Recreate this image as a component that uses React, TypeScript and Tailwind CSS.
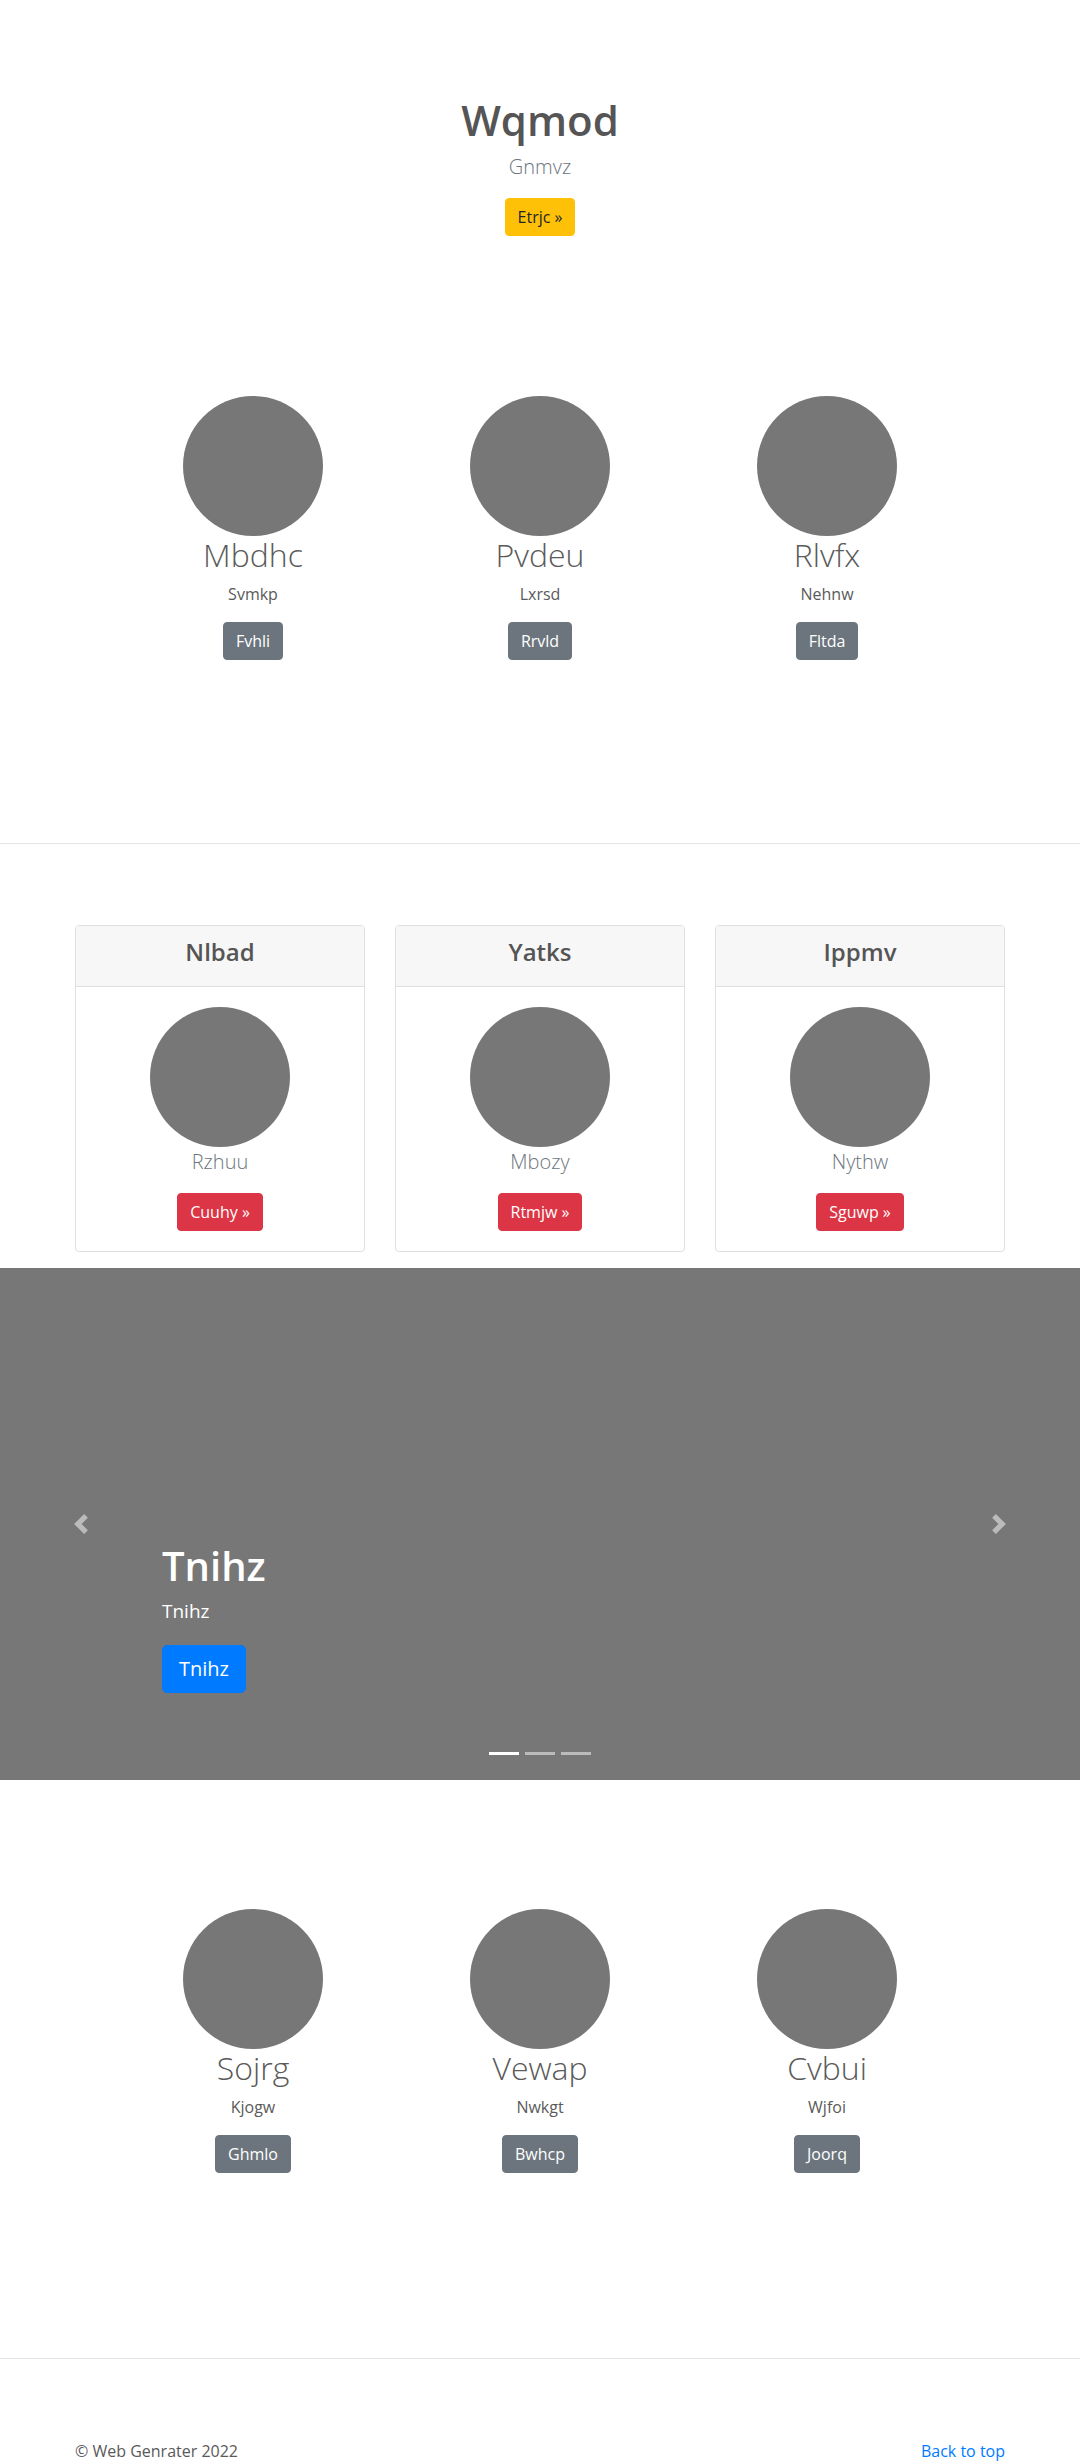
const font = { fontFamily: '"Open Sans", "Noto Sans", Arial, sans-serif' };

type Feature = { name: string; sub: string; btn: string };

const rowOne: Feature[] = [
  { name: "Mbdhc", sub: "Svmkp", btn: "Fvhli" },
  { name: "Pvdeu", sub: "Lxrsd", btn: "Rrvld" },
  { name: "Rlvfx", sub: "Nehnw", btn: "Fltda" },
];

const rowTwo: Feature[] = [
  { name: "Sojrg", sub: "Kjogw", btn: "Ghmlo" },
  { name: "Vewap", sub: "Nwkgt", btn: "Bwhcp" },
  { name: "Cvbui", sub: "Wjfoi", btn: "Joorq" },
];

const cards = [
  { title: "Nlbad", sub: "Rzhuu", btn: "Cuuhy »" },
  { title: "Yatks", sub: "Mbozy", btn: "Rtmjw »" },
  { title: "Ippmv", sub: "Nythw", btn: "Sguwp »" },
];

function Circle() {
  return <div className="h-[140px] w-[140px] shrink-0 rounded-full bg-[#777]" />;
}

function FeatureRow({ items }: { items: Feature[] }) {
  return (
    <div className="mx-auto grid w-[861px] grid-cols-3">
      {items.map((f) => (
        <div key={f.name} className="flex flex-col items-center text-center">
          <Circle />
          <h2 className="text-[32px] font-light leading-[38px] text-[#5a5a5a]">{f.name}</h2>
          <p className="mt-2 text-[16px] leading-[24px] text-[#5a5a5a]">{f.sub}</p>
          <button className="mt-4 rounded-[4px] border border-[#6c757d] bg-[#6c757d] px-3 py-1.5 text-[16px] leading-[24px] text-white">
            {f.btn}
          </button>
        </div>
      ))}
    </div>
  );
}

function Chevron({ dir }: { dir: "left" | "right" }) {
  return (
    <svg width="20" height="20" viewBox="0 0 8 8" className="opacity-50">
      <path
        fill="#fff"
        d={
          dir === "left"
            ? "M5.25 0l-4 4 4 4 1.5-1.5L4.25 4l2.5-2.5L5.25 0z"
            : "M2.75 0l-1.5 1.5L3.75 4l-2.5 2.5L2.75 8l4-4-4-4z"
        }
      />
    </svg>
  );
}

export default function App() {
  return (
    <div className="bg-white text-[#5a5a5a]" style={font}>
      {/* hero + first marketing row */}
      <section className="border-b border-[#e5e5e5] pb-[183px] pt-[95px]">
        <div className="flex flex-col items-center text-center">
          <h1 className="text-[42px] font-semibold leading-[50px] text-[#555]">Wqmod</h1>
          <p className="mt-[7px] text-[20px] font-light leading-[30px] text-[#6c757d]">Gnmvz</p>
          <button className="mt-4 rounded-[4px] border border-[#ffc107] bg-[#ffc107] px-3 py-1.5 text-[16px] leading-[24px] text-[#212529]">
            Etrjc »
          </button>
        </div>
        <div className="mt-[160px]">
          <FeatureRow items={rowOne} />
        </div>
      </section>

      {/* cards */}
      <section className="pt-[81px]">
        <div className="mx-auto grid w-[930px] grid-cols-3 gap-[30px]">
          {cards.map((c) => (
            <div key={c.title} className="overflow-hidden rounded-[4px] border border-[#dfdfdf] text-center">
              <div className="border-b border-[#dfdfdf] bg-[#f7f7f7] pb-[20px] pt-[12px]">
                <h4 className="text-[24px] font-semibold leading-[28px] text-[#555]">{c.title}</h4>
              </div>
              <div className="flex flex-col items-center px-5 pb-5 pt-5">
                <Circle />
                <p className="text-[20px] font-light leading-[30px] text-[#6c757d]">{c.sub}</p>
                <button className="mt-4 rounded-[4px] border border-[#dc3545] bg-[#dc3545] px-3 py-1.5 text-[16px] leading-[24px] text-white">
                  {c.btn}
                </button>
              </div>
            </div>
          ))}
        </div>
      </section>

      {/* carousel */}
      <section className="relative mt-4 h-[512px] bg-[#777]">
        <div className="absolute bottom-0 left-0 top-0 flex w-[15%] items-center justify-center">
          <Chevron dir="left" />
        </div>
        <div className="absolute bottom-0 right-0 top-0 flex w-[15%] items-center justify-center">
          <Chevron dir="right" />
        </div>
        <div className="absolute bottom-[87px] left-[15%] right-[15%] text-white">
          <h1 className="text-[40px] font-semibold leading-[48px]">Tnihz</h1>
          <p className="mt-[7px] text-[19px] leading-[28px]">Tnihz</p>
          <button className="mt-5 rounded-[5px] border border-[#007bff] bg-[#007bff] px-4 py-2 text-[20px] leading-[30px] text-white">
            Tnihz
          </button>
        </div>
        <div className="absolute bottom-[25px] left-1/2 flex -translate-x-1/2 gap-[6px]">
          <span className="h-[3px] w-[30px] bg-white" />
          <span className="h-[3px] w-[30px] bg-white/50" />
          <span className="h-[3px] w-[30px] bg-white/50" />
        </div>
      </section>

      {/* second marketing row */}
      <section className="border-b border-[#e5e5e5] pb-[185px] pt-[129px]">
        <FeatureRow items={rowTwo} />
      </section>

      <footer className="pt-[80px]">
        <div className="mx-auto flex w-[930px] justify-between text-[16px] leading-[24px]">
          <p className="text-[#5a5a5a]">© Web Genrater 2022</p>
          <a href="#" className="text-[#007bff]">
            Back to top
          </a>
        </div>
      </footer>
    </div>
  );
}
